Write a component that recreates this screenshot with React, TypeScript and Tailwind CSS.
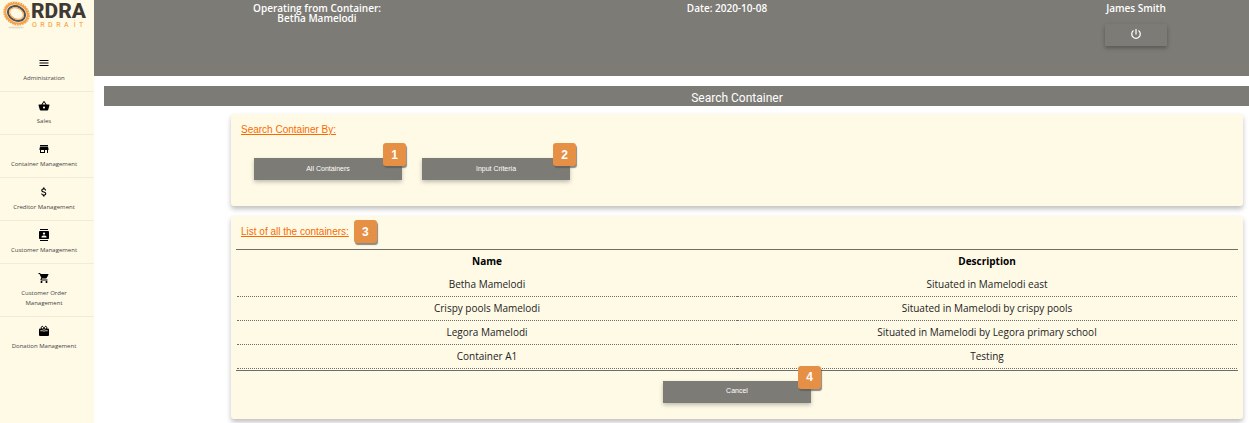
import type { ReactNode } from "react";
import {
  MdAttachMoney,
  MdContacts,
  MdMenu,
  MdShoppingBasket,
  MdShoppingCart,
  MdStore,
} from "react-icons/md";

function GiftBag({ className }: { className?: string }) {
  return (
    <svg viewBox="0 0 24 24" className={className} fill="none" aria-hidden="true">
      <rect x="2" y="7" width="20" height="15" rx="2" fill="currentColor" />
      <path d="M12 8C11 3 9 2 7.500 3S6 7 8 8M12 8c1-5 3-6 4.500-5s1.500 4-.5 5" stroke="currentColor" strokeWidth="2" />
      <path d="M4.500 11.500h3.500l3-3M19.500 11.500h-3.500l-3-3M9 12h6" stroke="#fffae6" strokeWidth="1.500" />
    </svg>
  );
}

function PowerIcon({ className }: { className?: string }) {
  return (
    <svg viewBox="0 0 24 24" className={className} fill="none" stroke="currentColor" strokeWidth="2.500" aria-hidden="true">
      <path d="M12 2v11M7 5.200a8.500 8.500 0 1 0 10 0" />
    </svg>
  );
}

const menu = [
  { label: "Administration", Icon: MdMenu },
  { label: "Sales", Icon: MdShoppingBasket },
  { label: "Container Management", Icon: MdStore },
  { label: "Creditor Management", Icon: MdAttachMoney },
  { label: "Customer Management", Icon: MdContacts },
  { label: "Customer Order Management", Icon: MdShoppingCart },
  { label: "Donation Management", Icon: GiftBag },
];

const containers = [
  { name: "Betha Mamelodi", description: "Situated in Mamelodi east" },
  { name: "Crispy pools Mamelodi", description: "Situated in Mamelodi by crispy pools" },
  { name: "Legora Mamelodi", description: "Situated in Mamelodi by Legora primary school" },
  { name: "Container A1", description: "Testing" },
];

function Logo() {
  return (
    <svg viewBox="0 0 94 32" className="block w-full" role="img" aria-label="Ordra IT">
      <ellipse cx="16" cy="27.500" rx="8" ry="1" fill="#e2ddce" />
      <g transform="rotate(28 16.500 13.500)" fill="none">
        <ellipse cx="16.5" cy="13.5" rx="12.2" ry="10" stroke="#f3a14a" strokeWidth="3" />
        <ellipse cx="16.5" cy="13.5" rx="13.2" ry="11" stroke="#fffae6" strokeWidth="1" strokeDasharray="1 1.6" />
        <ellipse cx="16.5" cy="13.5" rx="9" ry="7" stroke="#55504b" strokeWidth="2" />
        <ellipse cx="16.5" cy="13.5" rx="7.200" ry="5.400" stroke="#f3a14a" strokeWidth="1" />
      </g>
      <text x="31" y="18" fontFamily="Roboto, sans-serif" fontWeight="800" fontSize="21" fill="#3d3935">RDRA</text>
      <text x="32" y="27" fontFamily="Roboto, sans-serif" fontSize="7" fill="#f3941e">
        {"O\u00a0\u00a0R\u00a0\u00a0D\u00a0\u00a0R\u00a0\u00a0A\u00a0\u00a0\u00a0İ\u00a0\u00a0T"}
      </text>
    </svg>
  );
}

function Badge({ children, className }: { children: ReactNode; className?: string }) {
  return (
    <span
      className={`flex size-[23px] items-center justify-center rounded-[3px] bg-[#e69046] text-xs font-bold text-white shadow-[1px_2px_1px_rgba(90,90,90,0.7)] ${className ?? ""}`}
    >
      {children}
    </span>
  );
}

function ActionButton({ label, badge, badgeSide }: { label: string; badge: string; badgeSide: string }) {
  return (
    <div className="relative">
      <button
        type="button"
        className="block h-[22px] w-[148px] bg-[#7d7b76] text-[7px] text-white shadow-[0_2px_4px_rgba(0,0,0,0.25)]"
      >
        {label}
      </button>
      <Badge className={`absolute -top-[15px] ${badgeSide}`}>{badge}</Badge>
    </div>
  );
}

export default function App() {
  return (
    <div className="flex min-h-screen bg-white font-['Open_Sans',Lato,sans-serif]">
      <nav className="w-[94px] shrink-0 bg-[#fffae6]">
        <Logo />
        <ul className="mt-[17px]">
          {menu.map(({ label, Icon }) => (
            <li key={label} className="border-b border-[#f3ebd6] last:border-b-0">
              <a href="#" className="flex flex-col items-center gap-1 py-2 pr-3 pl-[6px] text-center text-black">
                <Icon className="size-3" />
                <span className="max-w-[72px] text-[6px] leading-[10px] text-[#444]">{label}</span>
              </a>
            </li>
          ))}
        </ul>
      </nav>

      <div className="min-w-0 flex-1">
        <header className="grid h-[76px] grid-cols-[446fr_374fr_335fr] bg-[#7d7b76] pt-[3px] text-center text-[10px] leading-[10px] font-semibold text-white">
          <p>
            Operating from Container:
            <br />
            Betha Mamelodi
          </p>
          <p>Date: 2020-10-08</p>
          <div className="flex flex-col items-center pl-[109px]">
            <p>James Smith</p>
            <button
              type="button"
              aria-label="Log out"
              className="mt-[11px] flex h-[22px] w-[62px] items-center justify-center pb-[2px] shadow-[0_2px_4px_rgba(0,0,0,0.3)]"
            >
              <PowerIcon className="size-3" />
            </button>
          </div>
        </header>

        <main className="pt-[10px] pl-[10px] font-['Liberation_Sans',Arial,sans-serif]">
          <h1 className="bg-[#7d7b76] pt-[5px] pr-[6px] pl-[127px] text-center font-[Roboto,sans-serif] text-xs leading-[15px] text-white">
            Search Container
          </h1>

          <div className="mt-2 mr-[6px] ml-[127px] flex flex-col gap-[10px]">
            <section className="rounded-[3px] bg-[#fffae6] px-[10px] pt-[10px] pb-[26px] shadow-[0_3px_5px_rgba(0,0,0,0.25)]">
              <h2 className="text-[10px] leading-3 text-[#f96a00] underline">Search Container By:</h2>
              <div className="mt-[22px] ml-[13px] flex gap-5">
                <ActionButton label="All Containers" badge="1" badgeSide="-right-1" />
                <ActionButton label="Input Criteria" badge="2" badgeSide="-right-[6px]" />
              </div>
            </section>

            <section className="rounded-[3px] bg-[#fffae6] px-[5px] pt-1 pb-4 shadow-[0_3px_5px_rgba(0,0,0,0.25)]">
              <div className="flex items-center gap-[5px] pl-[5px]">
                <h2 className="text-[10px] leading-3 text-[#f96a00] underline">List of all the containers:</h2>
                <Badge>3</Badge>
              </div>
              <div className="mt-[6px] border-y border-[#6f6d69] px-px pb-px">
                <table className="w-full table-fixed text-center font-['Open_Sans',Lato,sans-serif] text-[10px] leading-3 text-[#222]">
                  <thead>
                    <tr className="h-[22px] text-black">
                      <th>Name</th>
                      <th>Description</th>
                    </tr>
                  </thead>
                  <tbody>
                    {containers.map((c) => (
                      <tr key={c.name} className="h-6 border-b border-dotted border-[#6f6d69]">
                        <td>{c.name}</td>
                        <td>{c.description}</td>
                      </tr>
                    ))}
                  </tbody>
                </table>
              </div>
              <div className="mt-[10px] flex justify-center">
                <ActionButton label="Cancel" badge="4" badgeSide="-right-[10px]" />
              </div>
            </section>
          </div>
        </main>
      </div>
    </div>
  );
}
